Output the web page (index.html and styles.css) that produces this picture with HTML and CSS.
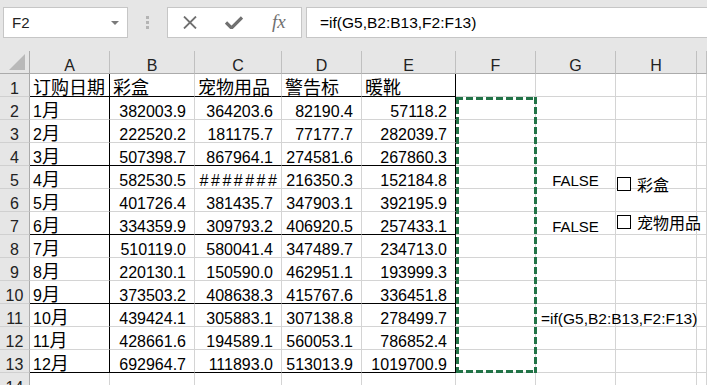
FILE: index.html
```html
<!DOCTYPE html>
<html lang="zh-CN">
<head>
  <meta charset="UTF-8">
  <title>Sheet1</title>
  <link rel="stylesheet" href="styles.css">
</head>
<body>
  <div class="formula-bar">
    <div class="name-box"><span>F2</span><span class="caret"></span></div>
    <div class="grip"><i></i><i></i><i></i></div>
    <div class="fx-buttons">
      <span class="slot">
        <svg width="14" height="13" viewBox="0 0 14 13"><path d="M1 0.5 L13 12.5 M13 0.5 L1 12.5" stroke="#707070" stroke-width="1.8" fill="none"/></svg>
      </span>
      <span class="slot">
        <svg width="18" height="13" viewBox="0 0 18 13"><path d="M1 6.5 L6.5 12 L17 1.5" stroke="#707070" stroke-width="3.2" fill="none"/></svg>
      </span>
      <span class="slot fx">fx</span>
    </div>
    <div class="formula-input">=if(G5,B2:B13,F2:F13)</div>
  </div>

  <div class="sheet">
    <div class="row head">
      <div class="corner"></div>
      <div class="ch">A</div><div class="ch">B</div><div class="ch">C</div><div class="ch">D</div>
      <div class="ch">E</div><div class="ch">F</div><div class="ch">G</div><div class="ch">H</div><div class="ch"></div>
    </div>

    <div class="row">
      <div class="rh">1</div>
      <div class="c t bb br"><span class="zh">订购日期</span></div><div class="c t bb"><span class="zh">彩盒</span></div>
      <div class="c t bb"><span class="zh">宠物用品</span></div>
      <div class="c t bb"><span class="zh">警告标</span></div><div class="c t bb br"><span class="zh">暖靴</span></div>
      <div class="c"></div><div class="c"></div><div class="c"></div><div class="c"></div>
    </div>
    <div class="row">
      <div class="rh">2</div>
      <div class="c t br">1<span class="zh">月</span></div><div class="c n">382003.9</div><div class="c n">364203.6</div>
      <div class="c n">82190.4</div><div class="c n br">57118.2</div>
      <div class="c"><div class="marquee"></div></div><div class="c"></div><div class="c"></div><div class="c"></div>
    </div>
    <div class="row">
      <div class="rh">3</div>
      <div class="c t br">2<span class="zh">月</span></div><div class="c n">222520.2</div><div class="c n">181175.7</div>
      <div class="c n">77177.7</div><div class="c n br">282039.7</div>
      <div class="c"></div><div class="c"></div><div class="c"></div><div class="c"></div>
    </div>
    <div class="row">
      <div class="rh">4</div>
      <div class="c t br bb">3<span class="zh">月</span></div><div class="c n bb">507398.7</div><div class="c n bb">867964.1</div>
      <div class="c n bb">274581.6</div><div class="c n br bb">267860.3</div>
      <div class="c"></div><div class="c"></div><div class="c"></div><div class="c"></div>
    </div>
    <div class="row">
      <div class="rh">5</div>
      <div class="c t br">4<span class="zh">月</span></div><div class="c n">582530.5</div><div class="c ctr hash">#######</div>
      <div class="c n">216350.3</div><div class="c n br">152184.8</div>
      <div class="c"></div><div class="c ctr bool">FALSE</div>
      <div class="c"><label class="check check-1"><span class="box"></span><span class="zh-s">彩盒</span></label></div>
      <div class="c"></div>
    </div>
    <div class="row">
      <div class="rh">6</div>
      <div class="c t br">5<span class="zh">月</span></div><div class="c n">401726.4</div><div class="c n">381435.7</div>
      <div class="c n">347903.1</div><div class="c n br">392195.9</div>
      <div class="c"></div><div class="c"></div><div class="c"></div><div class="c"></div>
    </div>
    <div class="row">
      <div class="rh">7</div>
      <div class="c t br bb">6<span class="zh">月</span></div><div class="c n bb">334359.9</div><div class="c n bb">309793.2</div>
      <div class="c n bb">406920.5</div><div class="c n br bb">257433.1</div>
      <div class="c"></div><div class="c ctr bool">FALSE</div>
      <div class="c"><label class="check check-2"><span class="box"></span><span class="zh-s">宠物用品</span></label></div>
      <div class="c"></div>
    </div>
    <div class="row">
      <div class="rh">8</div>
      <div class="c t br">7<span class="zh">月</span></div><div class="c n">510119.0</div><div class="c n">580041.4</div>
      <div class="c n">347489.7</div><div class="c n br">234713.0</div>
      <div class="c"></div><div class="c"></div><div class="c"></div><div class="c"></div>
    </div>
    <div class="row">
      <div class="rh">9</div>
      <div class="c t br">8<span class="zh">月</span></div><div class="c n">220130.1</div><div class="c n">150590.0</div>
      <div class="c n">462951.1</div><div class="c n br">193999.3</div>
      <div class="c"></div><div class="c"></div><div class="c"></div><div class="c"></div>
    </div>
    <div class="row">
      <div class="rh">10</div>
      <div class="c t br bb">9<span class="zh">月</span></div><div class="c n bb">373503.2</div><div class="c n bb">408638.3</div>
      <div class="c n bb">415767.6</div><div class="c n br bb">336451.8</div>
      <div class="c"></div><div class="c"></div><div class="c"></div><div class="c"></div>
    </div>
    <div class="row">
      <div class="rh">11</div>
      <div class="c t br">10<span class="zh">月</span></div><div class="c n">439424.1</div><div class="c n">305883.1</div>
      <div class="c n">307138.8</div><div class="c n br">278499.7</div>
      <div class="c"></div><div class="c t overflow">=if(G5,B2:B13,F2:F13)</div><div class="c"></div><div class="c"></div>
    </div>
    <div class="row">
      <div class="rh">12</div>
      <div class="c t br">11<span class="zh">月</span></div><div class="c n">428661.6</div><div class="c n">194589.1</div>
      <div class="c n">560053.1</div><div class="c n br">786852.4</div>
      <div class="c"></div><div class="c"></div><div class="c"></div><div class="c"></div>
    </div>
    <div class="row">
      <div class="rh">13</div>
      <div class="c t br bb">12<span class="zh">月</span></div><div class="c n bb">692964.7</div><div class="c n bb">111893.0</div>
      <div class="c n bb">513013.9</div><div class="c n br bb">1019700.9</div>
      <div class="c"></div><div class="c"></div><div class="c"></div><div class="c"></div>
    </div>
    <div class="row">
      <div class="rh">14</div>
      <div class="c"></div><div class="c"></div><div class="c"></div><div class="c"></div><div class="c"></div>
      <div class="c"></div><div class="c"></div><div class="c"></div><div class="c"></div>
    </div>
  </div>
</body>
</html>
```

FILE: styles.css
```css
html, body {
  margin: 0;
  padding: 0;
}
body {
  width: 707px;
  height: 385px;
  overflow: hidden;
  background-color: #e6e6e6;
  font-family: "Liberation Sans", Arial, "Noto Sans CJK SC", sans-serif;
  font-size: 16px;
  color: #000;
}

/* barre de formule */
.formula-bar {
  display: flex;
  align-items: flex-start;
  height: 51px;
  padding-top: 7px;
  box-sizing: border-box;
}
.name-box,
.fx-buttons,
.formula-input {
  height: 31px;
  box-sizing: border-box;
  background-color: #fff;
  border: 1px solid #c6c6c6;
  display: flex;
  align-items: center;
}
.name-box {
  margin-left: 3px;
  width: 125px;
  padding: 0 0 0 8px;
  justify-content: space-between;
  font-size: 15px;
  color: #222;
}
.caret {
  width: 0;
  height: 0;
  margin-right: 8px;
  border-left: 4px solid transparent;
  border-right: 4px solid transparent;
  border-top: 4px solid #7a7a7a;
}
.grip {
  width: 39px;
  height: 31px;
  display: flex;
  flex-direction: column;
  align-items: center;
  justify-content: center;
  gap: 2px;
}
.grip i {
  display: block;
  width: 3px;
  height: 3px;
  background-color: #b4b4b4;
}
.fx-buttons {
  width: 135px;
}
.slot {
  width: 45px;
  display: flex;
  justify-content: center;
  align-items: center;
}
.fx {
  font-family: "Liberation Serif", "Times New Roman", serif;
  font-style: italic;
  font-size: 19px;
  color: #707070;
  padding-bottom: 2px;
}
.formula-input {
  margin-left: 4px;
  flex: 1;
  border-right: none;
  padding-left: 13px;
  font-size: 15.5px;
  color: #000;
}

/* feuille */
.sheet {
  background-color: #fff;
}
.row {
  display: grid;
  grid-template-columns: 30px 80px 85px 87px 80px 94px 80px 80px 81px 1fr;
  height: 23px;
}
.row.head {
  background-color: #e6e6e6;
}
.corner {
  position: relative;
  border-right: 1px solid #ababab;
  border-bottom: 1px solid #ababab;
}
.corner::after {
  content: "";
  position: absolute;
  right: 4px;
  bottom: 3px;
  width: 0;
  height: 0;
  border-left: 16px solid transparent;
  border-bottom: 16px solid #b9b9b9;
}
.ch,
.rh,
.c {
  box-sizing: border-box;
  padding-top: 8px;
  line-height: 14px;
  white-space: nowrap;
  min-width: 0;
}
.ch {
  text-align: center;
  border-right: 1px solid #c0c0c0;
  border-bottom: 1px solid #ababab;
  color: #222;
}
.rh {
  text-align: center;
  background-color: #e6e6e6;
  border-right: 1px solid #ababab;
  border-bottom: 1px solid #d0d0d0;
  color: #222;
}
.c {
  position: relative;
  border-right: 1px solid #d4d4d4;
  border-bottom: 1px solid #d4d4d4;
}
.t {
  padding-left: 3px;
}
.n {
  text-align: right;
  padding-right: 8px;
}
.ctr {
  text-align: center;
}
.hash {
  letter-spacing: 2.5px;
  padding-left: 3px;
}
.bool {
  font-size: 15px;
}
.bb {
  border-bottom-color: #000;
}
.br {
  border-right-color: #000;
}
.zh {
  font-family: "Noto Sans CJK SC", sans-serif;
  font-size: 18px;
  line-height: 0;
}
.zh-s {
  font-family: "Noto Sans CJK SC", sans-serif;
  font-size: 16px;
  line-height: 16px;
}
.overflow {
  padding-left: 5px;
  font-size: 15.5px;
  z-index: 1;
}

/* zone copiée */
.marquee {
  position: absolute;
  left: 0;
  top: 0;
  width: 81px;
  height: 276px;
  z-index: 2;
  background:
    repeating-linear-gradient(90deg, #217346 0 7px, transparent 7px 10px) top left / 100% 3px no-repeat,
    repeating-linear-gradient(90deg, #217346 0 7px, transparent 7px 10px) bottom left / 100% 3px no-repeat,
    repeating-linear-gradient(180deg, #217346 0 7px, transparent 7px 10px) top left / 3px 100% no-repeat,
    repeating-linear-gradient(180deg, #217346 0 7px, transparent 7px 10px) top right / 3px 100% no-repeat;
}

/* cases à cocher */
.check {
  position: absolute;
  left: 1px;
  display: flex;
  align-items: center;
  gap: 6px;
  z-index: 1;
}
.check-1 { top: 10px; }
.check-2 { top: 2px; }
.box {
  width: 14px;
  height: 14px;
  box-sizing: border-box;
  border: 1px solid #000;
  background-color: #fff;
}
```
